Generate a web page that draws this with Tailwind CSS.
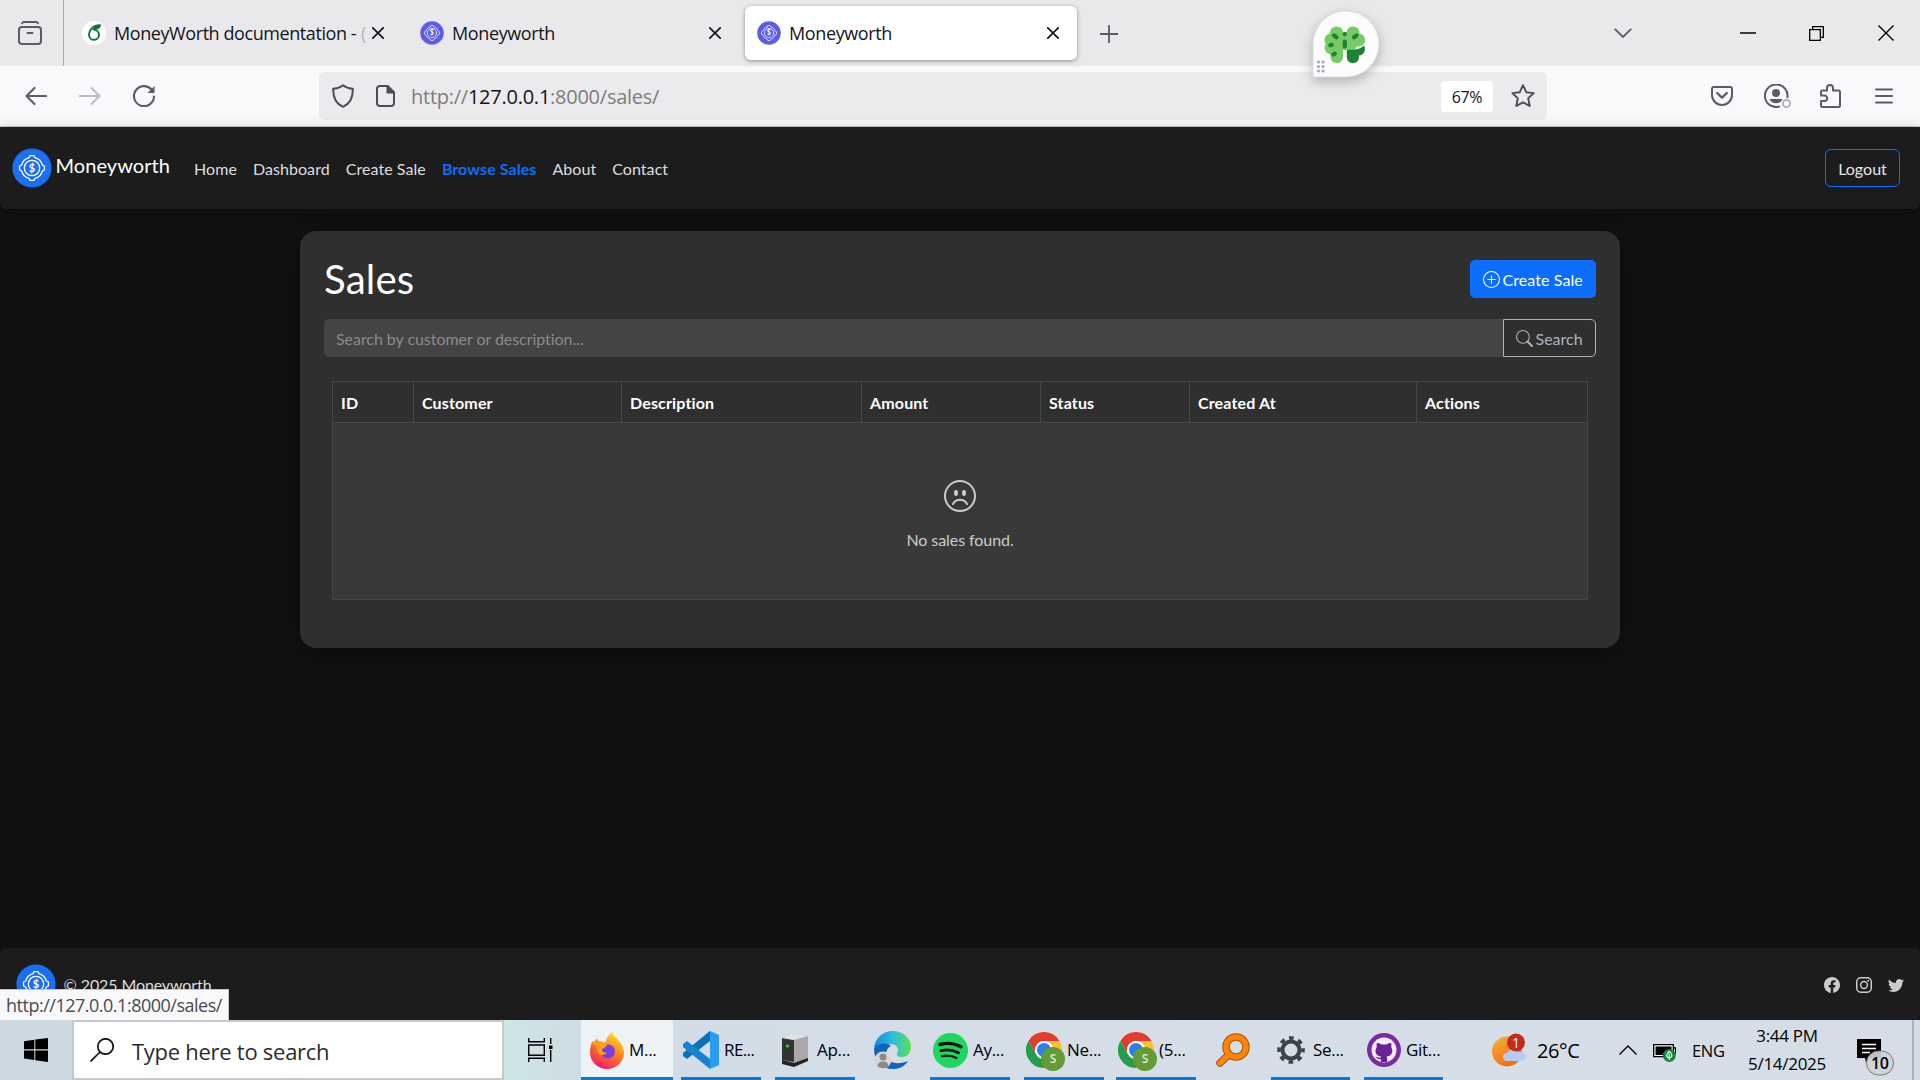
<!DOCTYPE html>
<html lang="en">
<head>
<meta charset="utf-8">
<title>Moneyworth</title>
<script src="https://cdn.jsdelivr.net/npm/@tailwindcss/browser@4"></script>
</head>
<body class="w-[1920px] h-[1080px] overflow-hidden bg-[#111] font-['Open_Sans','Noto_Sans',sans-serif]">
<svg class="hidden">
  <symbol id="logo" viewBox="0 0 40 40">
    <circle cx="20" cy="20" r="19.6" fill="var(--disc)"/>
    <g fill="none" stroke="#fff" stroke-width="1.25" stroke-linejoin="round" stroke-linecap="round">
      <path d="M17 9.600 18 7.600h4l1 2A10.800 10.800 0 0 1 30.400 17l2 1v4l-2 1A10.800 10.800 0 0 1 23 30.400l-1 2h-4l-1-2A10.800 10.800 0 0 1 9.600 23l-2-1v-4l2-1A10.800 10.800 0 0 1 17 9.600z"/>
      <circle cx="20" cy="20" r="7.700"/>
    </g>
    <text x="20" y="24" text-anchor="middle" font-size="11" font-weight="700" fill="#fff" font-family="Lato">$</text>
  </symbol>
  <symbol id="chrome" viewBox="0 0 36 36">
    <circle cx="18" cy="18" r="18" fill="#fff"/>
    <path d="M2.4 9A18 18 0 0 1 33.6 9H18a9 9 0 0 0-7.8 13.5z" fill="#e33b2e"/>
    <path d="M33.6 9A18 18 0 0 1 18 36l7.8-13.5A9 9 0 0 0 18 9z" fill="#fbc12d"/>
    <path d="M18 36A18 18 0 0 1 2.4 9l7.8 13.5A9 9 0 0 0 25.8 22.5z" fill="#259c48"/>
    <circle cx="18" cy="18" r="9" fill="#fff"/><circle cx="18" cy="18" r="7" fill="#2f7de9"/>
  </symbol>
  <symbol id="close" viewBox="0 0 12 12"><path d="M.8.8 11.2 11.2M11.2.8.8 11.2" stroke="#15141a" stroke-width="1.7" fill="none" stroke-linecap="round"/></symbol>
</svg>

<div class="flex flex-col h-full">
  <!-- tab strip -->
  <header class="relative flex h-[66px] shrink-0 bg-[#e9e9eb] text-[#15141a] text-[18px]">
    <div class="flex w-16 items-center pl-[18px] border-r border-[#a9a9ad]">
      <svg width="24" height="24" viewBox="0 0 24 24" fill="none" stroke="#5b5b66" stroke-width="2" stroke-linecap="round"><rect x="1" y="6" width="22" height="17" rx="3"/><path d="M4 2.2Q4.500 1 6 1h12q1.500 0 2 1.200M9.500 12h5"/></svg>
    </div>
    <div class="flex w-[338px] items-center pl-[18px]">
      <svg class="shrink-0" width="24" height="24" viewBox="0 0 24 24"><circle cx="12" cy="12" r="12" fill="#fff"/><path d="M18.800 4.400C14 3.500 7.500 6.500 7 14a5 5 0 1 0 5-5.200" fill="none" stroke="#14703c" stroke-width="1.900"/><path d="M10 9c1.500-3.500 4.500-5 9-4.800-.8 3.500-3.500 4.600-9 4.800z" fill="#14703c"/></svg>
      <span class="ml-2 w-[247px] whitespace-nowrap tracking-[-0.42px]">MoneyWorth documentation -</span>
      <span class="w-[7px] overflow-hidden text-[#b5b5b8]">(</span>
      <svg class="ml-[4px] shrink-0" width="12" height="12"><use href="#close"/></svg>
    </div>
    <div class="flex w-[343px] items-center pl-[18px]">
      <svg class="[--disc:#5b5ce8]" width="24" height="24"><use href="#logo"/></svg>
      <span class="ml-2 w-[257px] tracking-[-0.38px]">Moneyworth</span>
      <svg width="12" height="12"><use href="#close"/></svg>
    </div>
    <div class="flex w-[332px] h-[54px] mt-1.5 items-center pl-3 rounded-md bg-white shadow-[0_1px_4px_rgba(0,0,0,0.4)]">
      <svg class="[--disc:#5b5ce8]" width="24" height="24"><use href="#logo"/></svg>
      <span class="ml-2 w-[258px] tracking-[-0.38px]">Moneyworth</span>
      <svg width="12" height="12"><use href="#close"/></svg>
    </div>
    <svg class="ml-[23px] mt-[25px]" width="18" height="18" viewBox="0 0 18 18" stroke="#5b5b66" stroke-width="1.800"><path d="M9 0v18M0 9h18"/></svg>
    <div class="ml-auto flex items-center pr-[26px]">
      <svg class="mr-[108px]" width="18" height="10" viewBox="0 0 18 10" fill="none" stroke="#5b5b66" stroke-width="1.800"><path d="M.8.800 9 9 17.200.800"/></svg>
      <svg class="mr-[53px]" width="16" height="2"><path d="M0 1h16" stroke="#000" stroke-width="1.500"/></svg>
      <svg class="mr-[54px]" width="15" height="15" viewBox="0 0 15 15" fill="none" stroke="#000" stroke-width="1.300"><path d="M.7 3.700h10.600v10.600H.700zM3.700 3.500V.700h10.600v10.600h-2.800"/></svg>
      <svg width="16" height="16" viewBox="0 0 16 16" stroke="#000" stroke-width="1.400"><path d="M.5.500l15 15M15.500.500l-15 15"/></svg>
    </div>
    <!-- floating extension puck -->
    <svg class="absolute left-[1298px] top-0 z-10 drop-shadow-[0_4px_6px_rgba(0,0,0,0.25)]" width="100" height="90" viewBox="0 0 100 90">
      <path d="M15 77V43.500A33 33 0 1 1 48 77z" fill="#fbfbfb" stroke="#dcdcdc"/>
      <g fill="#76cb64"><circle cx="38.500" cy="33" r="6.600"/><circle cx="55" cy="33" r="6.600"/><circle cx="33" cy="40" r="6.600"/><circle cx="60.500" cy="40" r="6.600"/><circle cx="33" cy="48" r="6.400"/><path d="M33 33h27v11l-3 6H33z"/><rect x="32.500" y="42" width="12.500" height="21" rx="6"/></g>
      <path d="M48.800 50c7 0 13-.5 17.200-4.500 2.500 5-.5 9.500-5 10v1.700a6.100 6.100 0 0 1-12.200 0z" fill="#1f8136"/>
      <g stroke="#1f8136" stroke-width="4.200" stroke-linecap="round" fill="none"><path d="M36 35.500l2.500 1.800M58.500 35.500l-2.500 1.800M32.300 45.200l1.500-.4M35.300 54.500l1.500-.8M46.800 41.500v5M46.800 33.800v.400"/></g>
      <g fill="#a5a8bb"><circle cx="20.500" cy="62" r="1.600"/><circle cx="25" cy="62" r="1.600"/><circle cx="20.500" cy="66.500" r="1.600"/><circle cx="25" cy="66.500" r="1.600"/><circle cx="20.500" cy="71" r="1.600"/><circle cx="25" cy="71" r="1.600"/></g>
    </svg>
  </header>

  <!-- toolbar -->
  <div class="flex h-[61px] shrink-0 items-center bg-[#f9f9fb] border-b border-[#c2c7c7] pl-[25px] pr-[27px]">
    <svg width="22" height="18" viewBox="0 0 22 18" fill="none" stroke="#5b5b66" stroke-width="2.100" stroke-linecap="round" stroke-linejoin="round"><path d="M21 9H1.500M9.500 1 1.500 9l8 8"/></svg>
    <svg class="ml-8" width="22" height="18" viewBox="0 0 22 18" fill="none" stroke="#bdbdc3" stroke-width="2.100" stroke-linecap="round" stroke-linejoin="round"><path d="M1 9h19.500M12.500 1l8 8-8 8"/></svg>
    <svg class="ml-8" width="22" height="22" viewBox="0 0 22 22" fill="none" stroke="#5b5b66" stroke-width="2.100" stroke-linecap="round"><path d="M18.500 4.500A10 10 0 1 0 21 11.500"/><path d="M21.500 1v7h-7z" fill="#5b5b66" stroke="none"/></svg>
    <div class="ml-[164px] flex h-12 w-[1228px] items-center rounded-md bg-[#ebebed] pl-[13px]">
      <svg width="22" height="24" viewBox="0 0 22 24" fill="none" stroke="#4c4c54" stroke-width="2" stroke-linejoin="round"><path d="M11 1.200c2.500 2 6 3.300 9.800 3.600C21 13 18.500 19.500 11 22.800 3.500 19.500 1 13 1.200 4.800 5 4.500 8.500 3.200 11 1.200z"/></svg>
      <svg class="ml-[22px]" width="19" height="22" viewBox="0 0 19 22" fill="none" stroke="#4c4c54" stroke-width="2" stroke-linejoin="round"><path d="M11.500 1H4a3 3 0 0 0-3 3v14a3 3 0 0 0 3 3h11a3 3 0 0 0 3-3V7.500z"/><path d="M11.500 1v6.500H18z" fill="#4c4c54"/></svg>
      <span class="ml-4 w-[1030px] pt-0.5 text-[20px] tracking-[-0.25px] text-[#7d7d80]">http://<span class="text-[#15141a]">127.0.0.1</span>:8000/sales/</span>
      <span class="flex h-[31px] w-[52px] items-center justify-center rounded bg-white pt-0.5 text-[16px] tracking-[-0.4px] text-[#15141a]">67%</span>
      <svg class="ml-[18px]" width="24" height="24" viewBox="0 0 24 24" fill="none" stroke="#4c4c54" stroke-width="1.900" stroke-linejoin="round"><path d="M12 1.200l3.200 7 7.500.9-5.500 5.200 1.500 7.700L12 18.300 5.300 22l1.500-7.700L1.300 9.100l7.500-.9z"/></svg>
    </div>
    <svg class="ml-auto" width="22" height="20" viewBox="0 0 22 20" fill="none" stroke="#5b5b66" stroke-width="2" stroke-linecap="round" stroke-linejoin="round"><path d="M3 1h16a2 2 0 0 1 2 2v6a10 10 0 0 1-20 0V3a2 2 0 0 1 2-2z"/><path d="M6.200 7l4.800 4.600L15.800 7" stroke-width="2.300"/></svg>
    <svg class="ml-[31px]" width="28" height="24" viewBox="0 0 28 24" fill="none"><path d="M23.300 14A11.300 11.300 0 1 0 16 22.400" stroke="#5b5b66" stroke-width="2"/><circle cx="12" cy="9" r="4" fill="#5b5b66"/><path d="M5.500 15h13c-1.300 3-3.500 4.300-6.500 4.300S6.800 18 5.500 15z" fill="#5b5b66"/><circle cx="22.500" cy="19.500" r="3.600" fill="#f9f9fb" stroke="#b4b4ba" stroke-width="2"/></svg>
    <svg class="ml-[28px]" width="21" height="24" viewBox="0 0 21 24" fill="none" stroke="#5b5b66" stroke-width="2" stroke-linejoin="round"><path d="M2.500 6.500H7V4a3 3 0 0 1 6 0v2.500h5.500A1.500 1.500 0 0 1 20 8v13.500a1.500 1.500 0 0 1-1.500 1.500h-16A1.500 1.500 0 0 1 1 21.500V17h3.500a2.700 2.700 0 0 0 0-5.400H1V8a1.500 1.500 0 0 1 1.500-1.500z"/></svg>
    <svg class="ml-[34px]" width="18" height="16" viewBox="0 0 18 16" stroke="#5b5b66" stroke-width="2" stroke-linecap="round"><path d="M1 1.500h16M1 8h16M1 14.500h16"/></svg>
  </div>

  <!-- site -->
  <div class="relative flex min-h-0 flex-1 flex-col bg-[#111] font-['Lato',sans-serif] text-[16px]">
    <nav class="flex h-[82px] shrink-0 items-center rounded-b-md bg-[#1c1c1c] pl-[11.5px] pr-5 shadow-[0_4px_16px_rgba(0,0,0,0.3)]">
      <svg class="[--disc:#1a6ff5]" width="40" height="40"><use href="#logo"/></svg>
      <span class="ml-1 w-[138.5px] -mt-1.5 text-[20px] tracking-[0.07px] text-white">Moneyworth</span>
      <div class="mt-0.5 flex gap-4 tracking-[0.065px] text-[#dedede]">
        <a>Home</a><a>Dashboard</a><a>Create Sale</a><a class="font-bold text-[#0d6efd]">Browse Sales</a><a>About</a><a>Contact</a>
      </div>
      <a class="ml-auto flex h-[38px] w-[75px] items-center justify-center rounded-md border border-[#0d6efd] pt-0.5 text-[#e6e6e6]">Logout</a>
    </nav>

    <main class="mx-auto mt-[22px] h-[417px] w-[1320px] rounded-2xl bg-[#2f2f2f] px-6 pt-6 shadow-[0_8px_24px_rgba(0,0,0,0.35)]">
      <div class="flex h-[50px] items-center justify-between">
        <h1 class="-mt-0.5 text-[40.2px] leading-[48px] tracking-[0.15px] text-white">Sales</h1>
        <a class="mt-[-2px] flex h-[38px] w-[126px] items-center rounded-[5px] bg-[#0d6efd] pl-[13px] text-white">
          <svg width="17" height="17" viewBox="0 0 16 16" fill="none" stroke="#fff"><circle cx="8" cy="8" r="7.500"/><path d="M8 4.500v7M4.500 8h7" stroke-linecap="round"/></svg>
          <span class="ml-[2.500px] pt-0.5 whitespace-nowrap tracking-[0.08px]">Create Sale</span>
        </a>
      </div>
      <div class="mt-[14px] flex h-[38px]">
        <div class="flex w-[1179px] items-center rounded-l-[5px] bg-[#444] pl-3 pt-0.5 tracking-[-0.05px] text-[#8b8b8b]">Search by customer or description...</div>
        <div class="flex w-[93px] items-center rounded-r-[5px] border border-[#adb5bd] pl-3 text-[#adb5bd]">
          <svg width="17" height="17" viewBox="0 0 16 16" fill="none" stroke="#adb5bd"><circle cx="6.500" cy="6.500" r="6"/><path d="M10.800 10.800l4.200 4.200" stroke-width="1.900" stroke-linecap="round"/></svg>
          <span class="ml-[2.500px] pt-0.5">Search</span>
        </div>
      </div>
      <div class="mx-2 mt-6 grid h-[219px] w-[1256px] grid-cols-[81px_208px_240px_179px_149px_227px_170px] grid-rows-[40px_176px] gap-y-px border border-[#464646] bg-[#464646] tracking-[0.15px] [&>b]:border-r [&>b]:border-[#464646] [&>b]:bg-[#2f2f2f] [&>b]:pl-2 [&>b]:pt-[9px] [&>b]:text-white">
        <b>ID</b><b>Customer</b><b>Description</b><b>Amount</b><b>Status</b><b>Created At</b><b class="!border-r-0">Actions</b>
        <div class="col-span-7 flex flex-col items-center bg-[#393939] pt-[57px] text-[#ccc]">
          <svg width="32" height="32" viewBox="0 0 16 16" fill="none" stroke="#ccc"><circle cx="8" cy="8" r="7.500"/><path d="M4.500 12a4 4 0 0 1 7 0" stroke-linecap="round"/><g fill="#ccc" stroke="none"><ellipse cx="6" cy="6.500" rx="1" ry="1.500"/><ellipse cx="10" cy="6.500" rx="1" ry="1.500"/></g></svg>
          <span class="mt-4 tracking-[-0.07px]">No sales found.</span>
        </div>
      </div>
    </main>

    <footer class="mt-auto flex h-[72px] items-center rounded-md bg-[#1c1c1c] pl-4 pr-4 text-[#dedede]">
      <svg class="[--disc:#1a6ff5]" width="40" height="40"><use href="#logo"/></svg>
      <span class="ml-[7.500px] mt-0.5 tracking-[-0.1px]">© 2025 Moneyworth</span>
      <div class="ml-auto mt-0.5 flex gap-4">
        <svg width="16" height="16" viewBox="0 0 16 16"><path fill="#ccc" d="M16 8.049c0-4.446-3.582-8.050-8-8.050C3.580 0-.002 3.603-.002 8.050c0 4.017 2.926 7.347 6.750 7.951v-5.625h-2.030V8.050H6.750V6.275c0-2.017 1.195-3.131 3.022-3.131.876 0 1.791.157 1.791.157v1.980h-1.009c-.993 0-1.303.621-1.303 1.258v1.510h2.218l-.354 2.326H9.250V16c3.824-.604 6.750-3.934 6.750-7.951"/></svg>
        <svg width="16" height="16" viewBox="0 0 16 16" fill="none" stroke="#ccc" stroke-width="1.500"><rect x=".75" y=".75" width="14.500" height="14.500" rx="4"/><circle cx="8" cy="8" r="3.400"/><circle cx="12.200" cy="3.700" r=".95" fill="#ccc" stroke="none"/></svg>
        <svg width="16" height="16" viewBox="0 0 16 16"><path fill="#ccc" d="M5.026 15c6.038 0 9.341-5.003 9.341-9.334q.002-.211-.006-.422A6.700 6.700 0 0 0 16 3.542a6.700 6.700 0 0 1-1.889.518 3.300 3.300 0 0 0 1.447-1.817 6.500 6.500 0 0 1-2.087.793A3.286 3.286 0 0 0 7.875 6.030a9.320 9.320 0 0 1-6.767-3.429 3.290 3.290 0 0 0 1.018 4.382A3.300 3.300 0 0 1 .640 6.575v.045a3.290 3.290 0 0 0 2.632 3.218 3.200 3.200 0 0 1-.865.115 3 3 0 0 1-.614-.057 3.280 3.280 0 0 0 3.067 2.277A6.600 6.600 0 0 1 .780 13.580a6 6 0 0 1-.780-.045A9.340 9.340 0 0 0 5.026 15"/></svg>
      </div>
    </footer>
    <div class="absolute bottom-0 left-0 flex h-[31px] w-[229px] items-center border-r border-t border-[#c8c8c8] bg-[#f9f9fb] pl-1.5 font-['Open_Sans',sans-serif] text-[18px] tracking-[-0.49px] text-[#4a4a4f]"><span>http://127.0.0.1:8000/sales/</span></div>
  </div>

  <!-- taskbar -->
  <div class="flex h-[60px] shrink-0 bg-linear-to-r from-[#ccd9e1] via-[#d5dee8] to-[#d6dde6] text-[17px] tracking-[-0.3px] text-black">
    <div class="flex w-[72px] items-center pl-6">
      <svg width="24" height="24" viewBox="0 0 24 24"><path d="M0 3.200 10.300 1.800V11.300H0zM11.300 1.600 24 0v11.300H11.300zM0 12.400h10.300v9.600L0 20.600zM11.300 12.400H24V24l-12.700-1.700z"/></svg>
    </div>
    <div class="flex w-[432px] items-center border-2 border-[#c8c8c8] bg-white pl-4">
      <svg width="24" height="24" viewBox="0 0 24 24" fill="none" stroke="#111" stroke-width="1.700"><circle cx="15.500" cy="8.500" r="7.700"/><path d="M10 14 .500 23.500"/></svg>
      <span class="ml-[18px] pt-0.5 text-[22px] tracking-[-0.27px] text-[#2b2b2b]">Type here to search</span>
    </div>
    <div class="flex w-[77px] items-center bg-linear-to-r from-[#cce6e6] to-[#d0dce4] pl-6">
      <svg width="25" height="24" viewBox="0 0 25 24" fill="none" stroke="#000" stroke-width="1.400"><path d="M.7 0v3.700h15.600V0M.7 7h15.600v10.300H.700zM.7 24v-3.700h15.600V24M22.700 0v6M22.700 12v12"/><path d="M21 7.500h3.500V11H21z" fill="#000" stroke="none"/></svg>
    </div>
    <div class="flex w-[92px] items-center border-b-3 border-[#0b78d4] bg-[#edf2f5] pl-[9px] pt-[3px]">
      <svg width="34" height="37" viewBox="0 0 34 37"><defs><linearGradient id="ff" x1=".8" y1="0" x2=".3" y2="1"><stop offset="0" stop-color="#ffe53b"/><stop offset=".45" stop-color="#ff8a16"/><stop offset="1" stop-color="#f5156c"/></linearGradient></defs><path d="M22 0c1 4 5 5 6 8l2 2c3 4 4 8 4 11 0 9-8 16-17 16S0 30 0 20c0-5 1-9 3-11v3l4-6 1 3c3 0 5 1 7 2 1-4 3-8 7-11z" fill="url(#ff)"/><circle cx="18" cy="19.500" r="7" fill="#7a3fe0"/><path d="M3 9c5 0 9 3 14 4-1 3-5 3-5 5s3 3 5 2c-2 4-8 4-9 0z" fill="#ff9d1e"/></svg>
      <span class="ml-[5px]">M...</span>
    </div>
    <div class="ml-2 flex w-[80px] items-center border-b-3 border-[#0b78d4] pl-0.5 pt-[3px]">
      <svg class="shrink-0" width="36" height="38" viewBox="0 0 36 38"><path d="M27 0v10L4 28 0 25v-3z" fill="#0a70b8"/><path d="M27 38V28L4 10l-4 3v3z" fill="#1583cf"/><path d="M27 0l9 4v30l-9 4z" fill="#2a9cf0"/></svg>
      <span class="ml-[5px] tracking-[-0.6px]">RE...</span>
    </div>
    <div class="ml-[14px] flex w-[80px] items-center border-b-3 border-[#0b78d4] pl-[7px] pt-[3px]">
      <svg class="shrink-0" width="26" height="34" viewBox="0 0 26 34"><path d="M0 5 10 0l16 3v23l-12 6L0 28z" fill="#a9a9a9"/><path d="M0 5l12 2v22L0 27z" fill="#333"/><path d="M0 5 10 0l16 3-14 4z" fill="#e2e2e2"/><path d="M0 27l12 3 14-5v3l-14 6-12-3z" fill="#222"/><circle cx="5.500" cy="13" r="1.600" fill="#2fe02f"/></svg>
      <span class="ml-[9px]">Ap...</span>
    </div>
    <div class="ml-[19px] flex w-[37px] items-center">
      <svg width="37" height="38" viewBox="0 0 37 38"><defs><linearGradient id="ed"><stop offset="0" stop-color="#168ad8"/><stop offset=".5" stop-color="#2cbde0"/><stop offset="1" stop-color="#5fe04e"/></linearGradient></defs><path d="M0 17C1 7 9 0 19 0s18 7 18 16c0 6-4 10-9 10-4 0-6-2-5-4 3-5-1-9-7-9C10 13 3 15 0 17z" fill="url(#ed)"/><path d="M0 18c3-6 13-7 17-3-5 2-6 8-3 13 3 4 9 6 20 2-4 6-9 8-15 8C8 38 0 30 0 18z" fill="#1264b8"/><circle cx="9" cy="29" r="8.500" fill="#d9d7d3"/><circle cx="9" cy="26" r="3.500" fill="#8d8984"/><path d="M3.500 35c0-6 11-6 11 0-3 3-8 3-11 0z" fill="#8d8984"/></svg>
    </div>
    <div class="ml-[19px] flex w-[80px] items-center border-b-3 border-[#0b78d4] pl-[3px] pt-[3px]">
      <svg class="shrink-0" width="35" height="35" viewBox="0 0 35 35" fill="none" stroke="#121212" stroke-linecap="round"><circle cx="17.500" cy="17.500" r="17.500" fill="#1ed760" stroke="none"/><path d="M7 11.500c7-2 15-1 21 2.200" stroke-width="3.400"/><path d="M8 17.700c6-1.600 12-.8 17.500 2" stroke-width="2.900"/><path d="M9 23.200c5-1.200 10-.6 14.500 1.800" stroke-width="2.300"/></svg>
      <span class="ml-[5px]">Ay...</span>
    </div>
    <div class="ml-[14px] flex w-[80px] items-center border-b-3 border-[#0b78d4] pl-0.5 pt-[3px]">
      <div class="relative shrink-0"><svg width="36" height="36"><use href="#chrome"/></svg><span class="absolute left-[15px] top-[15px] flex size-[24px] items-center justify-center rounded-full bg-[#649b37] text-[12px] font-semibold text-[#dfead5]">S</span></div>
      <span class="ml-[5px]">Ne...</span>
    </div>
    <div class="ml-3 flex w-[80px] items-center border-b-3 border-[#0b78d4] pl-0.5 pt-[3px]">
      <div class="relative shrink-0"><svg width="36" height="36"><use href="#chrome"/></svg><span class="absolute left-[15px] top-[15px] flex size-[24px] items-center justify-center rounded-full bg-[#649b37] text-[12px] font-semibold text-[#dfead5]">S</span></div>
      <span class="ml-[5px]">(5...</span>
    </div>
    <div class="ml-5 flex w-[34px] items-center">
      <svg width="34" height="34" viewBox="0 0 34 34" fill="none" stroke-linecap="round"><g stroke="#a94f0a" stroke-width="7.500"><circle cx="20" cy="14" r="10"/><path d="M12.500 22 4 30"/></g><g stroke="#ff8307" stroke-width="5.500"><circle cx="20" cy="14" r="10"/><path d="M12.500 22 4 30"/></g></svg>
    </div>
    <div class="ml-[21px] flex w-[79px] items-center border-b-3 border-[#0b78d4] pl-1.5 pt-[3px]">
      <svg class="shrink-0" width="28" height="28" viewBox="0 0 28 28" fill="none" stroke="#3e4347"><circle cx="14" cy="14" r="8.500" stroke-width="4"/><circle cx="14" cy="14" r="12" stroke-width="3.600" stroke-dasharray="4.700 4.720" stroke-dashoffset="2.300"/></svg>
      <span class="ml-2">Se...</span>
    </div>
    <div class="ml-[14px] flex w-[79px] items-center border-b-3 border-[#0b78d4] pl-[3px] pt-[3px]">
      <svg class="shrink-0" width="34" height="34" viewBox="0 0 34 34"><circle cx="17" cy="17" r="17" fill="#7a2ba3"/><circle cx="17" cy="17" r="12.500" fill="#f3eef8"/><path d="M10 10c2 0 3 .5 4.500 1.500h5C21 10.500 22 10 24 10c.6 1.500.5 3 .2 4 3 6-.5 9-4.700 9.600.7 1 .7 2 .7 5.500h-6.400v-3c-3 .6-4-1-5-2.600 2 .5 2.500 1.500 4.800 1.200 0-.5.200-.8.600-1.100-4.200-.6-7.700-3.600-4.400-9.600-.3-1-.4-2.500.2-4z" fill="#6a2396"/></svg>
      <span class="ml-[5px]">Git...</span>
    </div>

    <div class="flex flex-1 items-center pl-[49px] tracking-normal">
      <svg width="34" height="34" viewBox="0 0 34 34"><defs><linearGradient id="sun" x1="0" y1="0" x2=".5" y2="1"><stop offset="0" stop-color="#f3b63a"/><stop offset="1" stop-color="#f56c11"/></linearGradient></defs><circle cx="15" cy="18.500" r="15" fill="url(#sun)"/><path d="M15 28a4 4 0 0 1 0-8c2-4 8-5 11-1 5-1 8 1 7.500 5-.5 3-2 4-5 4z" fill="#b5cbf5"/><circle cx="24" cy="9.500" r="9" fill="#c42b1c"/><text x="24" y="14.500" text-anchor="middle" font-size="14" fill="#fff">1</text></svg>
      <span class="ml-[11px] w-[82px] pt-0.5 text-[20px] tracking-[-0.4px]">26°C</span>
      <svg width="18" height="10" viewBox="0 0 18 10" fill="none" stroke="#000" stroke-width="1.400"><path d="M.5 9.500 9 1l8.500 8.500"/></svg>
      <svg class="ml-4 mt-[5px]" width="23" height="18" viewBox="0 0 23 18"><path d="M.7.700h19.600v12H.700zM21 4h1.500v5H21" fill="#fff" stroke="#000" stroke-width="1.300"/><path d="M2.500 2.500h16v8.500h-16z"/><circle cx="16.300" cy="11.500" r="6.500" fill="#10893e"/><path d="M16.300 7.500c4 3 3 6 0 6.500-3-.5-4-3.500 0-6.500zM16.300 10v6" fill="none" stroke="#fff" stroke-width="1.200"/></svg>
      <span class="ml-4 w-[36px] pt-0.5 text-[16.500px] tracking-[-0.3px]">ENG</span>
      <div class="ml-[11px] flex w-[96px] flex-col items-center text-[17px] leading-7 tracking-[-0.3px] whitespace-nowrap"><span>3:44 PM</span><span>5/14/2025</span></div>
      <svg class="ml-[22px] mt-4 shrink-0" width="38" height="38" viewBox="0 0 38 38"><path d="M0 0h24v19H13l-4 5-1-5H0z"/><path d="M5 5.500h14M5 9.500h14M5 13.500h8" stroke="#fff" stroke-width="1.300"/><rect x="9.500" y="12" width="27" height="24" rx="12" fill="#cfd2d5" fill-opacity=".92" stroke="#777"/><text x="22.700" y="30" text-anchor="middle" font-size="16" font-weight="600" letter-spacing="-.5">10</text></svg>
      <div class="ml-auto h-full w-2 border-l-2 border-[#a9b1b9]"></div>
    </div>
  </div>
</div>
</body>
</html>
